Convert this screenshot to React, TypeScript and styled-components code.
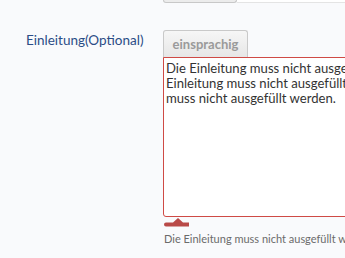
import React from "react";
import styled, { createGlobalStyle } from "styled-components";

const Global = createGlobalStyle`
  html, body { margin: 0; padding: 0; background: #f9fafc; overflow: hidden; }
  body { font-family: "Lato", "Open Sans", sans-serif; }
`;

const Page = styled.div`
  width: 345px;
  height: 258px;
  overflow: hidden;
`;

const PrevRow = styled.div`
  display: flex;
  margin-left: 163px;
  height: 3px;
`;

const PrevButton = styled.div`
  width: 72px;
  height: 2px;
  background: #ececec;
  border: 1px solid #c8c8c8;
  border-top: none;
  border-radius: 0 0 3px 3px;
`;

const PrevInput = styled.div`
  flex: 1;
  height: 2px;
  background: #fff;
  border-bottom: 1px solid #e4e4e4;
`;

const Row = styled.div`
  display: flex;
  margin-top: 27px;
`;

const Label = styled.label`
  flex: 0 0 137px;
  padding-left: 26px;
  padding-top: 1px;
  font-size: 13.5px;
  line-height: 18px;
  color: #2b4c86;
`;

const Field = styled.div`
  display: flex;
  flex-direction: column;
  flex: 1 1 auto;
  min-width: 0;
`;

const Tab = styled.div`
  align-self: flex-start;
  box-sizing: border-box;
  width: 85px;
  height: 28px;
  margin-bottom: -1px;
  border: 1px solid #c9c9c9;
  border-bottom: none;
  border-radius: 3px 3px 0 0;
  background: linear-gradient(#f6f6f6, #e6e6e6);
  color: #9a9a9a;
  font-weight: bold;
  font-size: 13px;
  line-height: 26px;
  text-align: center;
`;

const TextArea = styled.textarea`
  box-sizing: border-box;
  flex: none;
  width: 400px;
  height: 160px;
  margin: 0;
  padding: 3px 2px;
  border: 1px solid #cf4a45;
  border-radius: 0 0 0 3px;
  background: #fff;
  color: #333;
  font-family: "Lato", "Open Sans", sans-serif;
  font-size: 13.1px;
  line-height: 15px;
  resize: none;
  outline: none;
  overflow: hidden;
  white-space: pre;
`;

const Pointer = styled.svg`
  display: block;
  margin-top: 1px;
`;

const ErrorText = styled.div`
  margin-top: 5px;
  padding-left: 1px;
  font-size: 11px;
  line-height: 14px;
  color: #6b6b6b;
  white-space: nowrap;
`;

const text =
  "Die Einleitung muss nicht ausgefüllt werden. Die\nEinleitung muss nicht ausgefüllt werden. Die Einleitung\nmuss nicht ausgefüllt werden.";

export default function App() {
  return (
    <Page>
      <Global />
      <PrevRow>
        <PrevButton />
        <PrevInput />
      </PrevRow>
      <Row>
        <Label>Einleitung(Optional)</Label>
        <Field>
          <Tab>einsprachig</Tab>
          <TextArea defaultValue={text} spellCheck={false} />
          <Pointer width="28" height="9" viewBox="0 0 28 9">
            <path
              d="M3 4.5 H10 L15 0 L20 4.5 H26 V8.5 H3 Q1 8.5 1 6.5 Q1 4.5 3 4.5 Z"
              fill="#b94a48"
            />
          </Pointer>
          <ErrorText>Die Einleitung muss nicht ausgefüllt werden.</ErrorText>
        </Field>
      </Row>
    </Page>
  );
}
